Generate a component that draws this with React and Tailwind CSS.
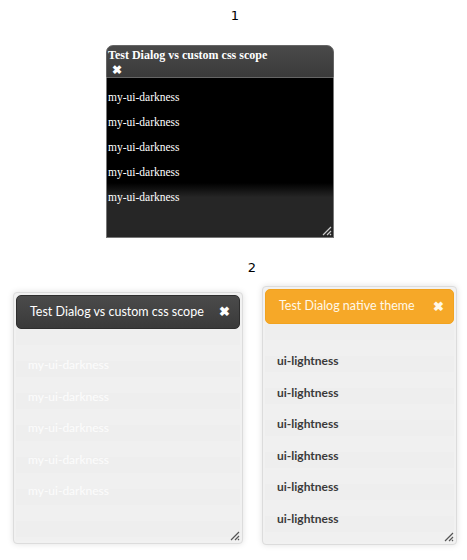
function Grip({ color }) {
    return <svg width="12" height="12" viewBox="0 0 12 12" className="absolute right-[2px] bottom-[2px]">
        <path d="M11 3 L3 11 M11 7 L7 11 M11 10 L10 11" stroke={color} strokeWidth="1.2" />
    </svg>
}

function DarkDialog() {
    const rows = [0, 1, 2, 3, 4]
    return <div className="relative ml-[106px] mt-[21px] w-[228px] h-[193px] flex flex-col font-['Liberation_Serif'] text-[12px]">
        <div className="h-[33px] rounded-t-[7px] bg-gradient-to-b from-[#4a4a4a] to-[#3a3a3a] border border-[#666] pl-[1px] pt-[2px] text-white font-bold leading-[14px]">
            <div>Test Dialog vs custom css scope</div>
            <div className="pl-[4px] pt-[1px] leading-[14px]">✖</div>
        </div>
        <div className="flex-1 border border-[#777] border-t-0 bg-[linear-gradient(to_bottom,#000_0%,#000_66%,#262626_75%,#262626_100%)] pt-[7px] text-white text-[11.5px] leading-[25px] pl-[1px]">
            {rows.map(i => <div key={i}>my-ui-darkness</div>)}
        </div>
        <Grip color="#ccc" />
    </div>
}

function Dialog({ title, item, titleClass, itemClass, top, bottomPad, className }) {
    const rows = bottomPad ? [0, 1, 2, 3, 4] : [0, 1, 2, 3, 4, 5]
    return <div className={"relative rounded-[4px] border border-[#dcdcdc] bg-[#f1f1f1] p-[2px] shadow-[0_0_6px_rgba(0,0,0,0.12)] flex flex-col font-['Lato'] " + className}>
        <div className={"flex items-center justify-between rounded-[5px] pl-[13px] pr-[9px] text-[12.5px] " + titleClass}>
            <span>{title}</span>
            <span className="text-[13px] font-bold">✖</span>
        </div>
        <div className="flex-1 bg-[repeating-linear-gradient(to_bottom,#eeeeee_0px,#eeeeee_16px,#f0f0f0_16px,#f0f0f0_32px)] pl-[12px]" style={{ paddingTop: top }}>
            {rows.map(i => <div key={i} className={"text-[12px] " + itemClass}>{item}</div>)}
        </div>
        <Grip color="#555" />
    </div>
}

export default function App() {
    return <div className="w-[467px] h-[560px] bg-white">
        <div className="pt-[8px] text-center pl-[3px] font-['DejaVu_Sans'] text-[13px] leading-[16px] text-black">1</div>
        <DarkDialog />
        <div className="mt-[22px] pl-[37px] text-center font-['DejaVu_Sans'] text-[13px] leading-[16px] text-black">2</div>
        <div className="flex items-start mt-[7px]">
            <Dialog
                className="ml-[13px] mt-[9px] w-[230px] h-[252px]"
                title="Test Dialog vs custom css scope"
                item="my-ui-darkness"
                titleClass="h-[34px] bg-gradient-to-b from-[#4b4b4b] to-[#3a3a3a] border border-[#2e2e2e] text-white"
                itemClass="text-white/80 leading-[31.5px]"
                top="20px"
                bottomPad
            />
            <Dialog
                className="ml-[19px] mt-[3px] w-[195px] h-[259px]"
                title="Test Dialog native theme"
                item="ui-lightness"
                titleClass="h-[35px] bg-[#f6a828] border border-[#f1a320] text-[#fff8e8]"
                itemClass="text-[#3a3a3a] font-bold leading-[31.5px]"
                top="21px"
            />
        </div>
    </div>
}
